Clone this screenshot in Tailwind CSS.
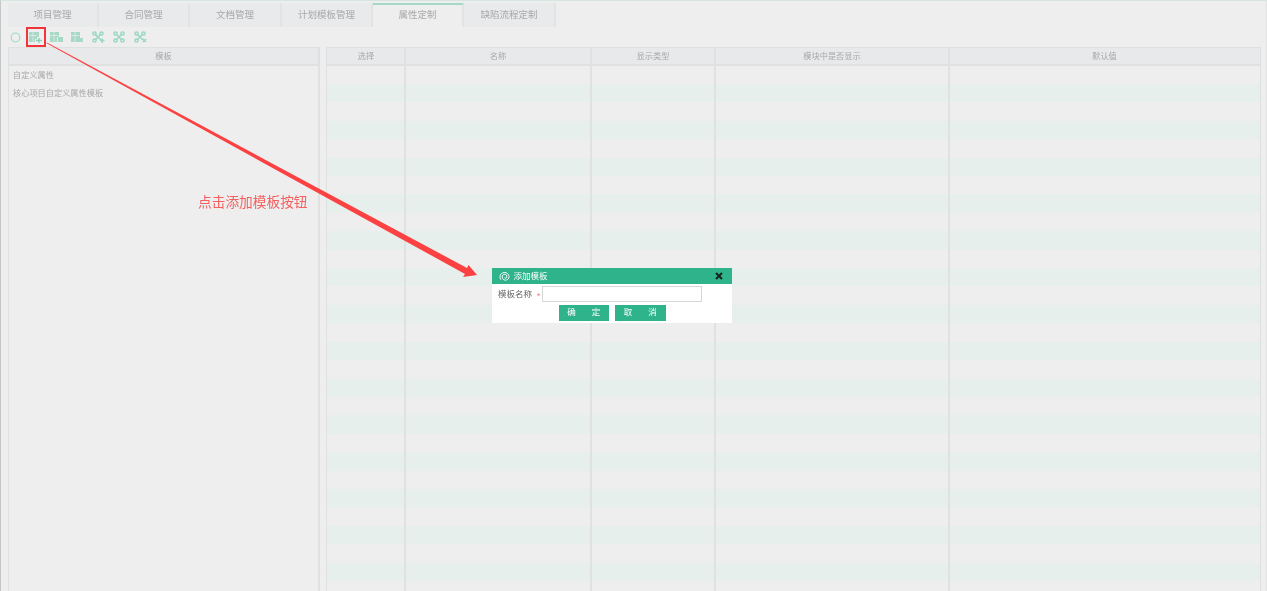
<!DOCTYPE html>
<html lang="zh-CN">

<head>
    <meta charset="UTF-8">
    <title>属性定制</title>
    <script src="https://cdn.jsdelivr.net/npm/@tailwindcss/browser@4"></script>
</head>

<body class="relative h-[591px] w-[1267px] overflow-hidden bg-[#eeeeee] font-['Liberation_Sans','Noto_Sans_CJK_SC',sans-serif]">

    <div class="flex h-[591px] flex-col border-x border-t border-t-[#d5e6e0] border-l-[#c4c8c8] border-r-[#e4e4e4] pl-[7px] pr-[5px] pt-[2px]">

        <!-- tabs -->
        <div class="flex h-6 text-[9.5px] text-[#a8a8a8]">
            <div class="flex w-[91px] items-center justify-center border-r-2 border-[#e2e3e3] bg-[#e9eaeb]"><span class="blur-[0.4px]">项目管理</span></div>
            <div class="flex w-[91px] items-center justify-center border-r-2 border-[#e2e3e3] bg-[#e9eaeb]"><span class="blur-[0.4px]">合同管理</span></div>
            <div class="flex w-[92px] items-center justify-center border-r-2 border-[#e2e3e3] bg-[#e9eaeb]"><span class="blur-[0.4px]">文档管理</span></div>
            <div class="flex w-[91px] items-center justify-center border-r-2 border-[#e2e3e3] bg-[#e9eaeb]"><span class="blur-[0.4px]">计划模板管理</span></div>
            <div class="flex w-[91px] items-center justify-center border-t-2 border-r-2 border-t-[#a5d9c6] border-r-[#e2e3e3] pb-[2px]"><span class="blur-[0.4px]">属性定制</span></div>
            <div class="flex w-[92px] items-center justify-center border-r-2 border-[#e2e3e3] bg-[#e9eaeb]"><span class="blur-[0.4px]">缺陷流程定制</span></div>
        </div>

        <!-- toolbar -->
        <div class="flex h-[20px] items-center gap-[8px] pl-[2px] blur-[0.6px]">
            <svg class="h-[11px] w-[11px]" viewBox="0 0 11 11"><circle cx="5.500" cy="5.500" r="4.400" fill="none" stroke="#a8dcc9" stroke-width="1.300" /></svg>
            <svg class="h-3 w-[13px]" viewBox="0 0 13 12"><path fill="#a8d8c6" d="M0 1h10v5H8v2H6v3H0z" /><path stroke="#eee" stroke-width=".7" d="M0 4.500h8M4 1v10" /><path stroke="#8fcfb8" stroke-width="1.400" d="M7 9.500h6M10 7v5" /></svg>
            <svg class="h-3 w-[13px]" viewBox="0 0 13 12"><path fill="#a8d8c6" d="M0 1h9v5H7v5H0z" /><path stroke="#eee" stroke-width=".7" d="M0 4.500h8M4 1v10" /><path fill="#a8d8c6" d="M8 6h5v5H8z" /></svg>
            <svg class="h-3 w-[13px]" viewBox="0 0 13 12"><path fill="#a8d8c6" d="M0 1h9v6h3v4H0z" /><path stroke="#eee" stroke-width=".7" d="M0 4.500h8M4 1v10" /></svg>
            <svg class="h-3 w-[13px]" viewBox="0 0 13 12" fill="none" stroke="#9bd8c2" stroke-width="1.500"><path d="M3 3l6 6M9 3L3 9" /><circle cx="2.500" cy="2.500" r="1.600" /><circle cx="9.500" cy="2.500" r="1.600" /><circle cx="2.500" cy="9.500" r="1.600" /><path d="M8 9.500h4.500M10.200 7.500v4.500" /></svg>
            <svg class="h-3 w-[13px]" viewBox="0 0 13 12" fill="none" stroke="#9bd8c2" stroke-width="1.500"><path d="M3 3l6 6M9 3L3 9" /><circle cx="2.500" cy="2.500" r="1.600" /><circle cx="9.500" cy="2.500" r="1.600" /><circle cx="2.500" cy="9.500" r="1.600" /><circle cx="9.500" cy="9.500" r="1.600" /></svg>
            <svg class="h-3 w-[13px]" viewBox="0 0 13 12" fill="none" stroke="#9bd8c2" stroke-width="1.500"><path d="M3 3l6 6M9 3L3 9" /><circle cx="2.500" cy="2.500" r="1.600" /><circle cx="9.500" cy="2.500" r="1.600" /><circle cx="2.500" cy="9.500" r="1.600" /><path d="M9 8l3 3M12 8l-3 3" /></svg>
        </div>

        <!-- panels -->
        <div class="flex min-h-0 flex-1 gap-[6px] text-[8.2px] text-[#a8a8a8]">
            <div class="w-[312px] border-t border-r-2 border-l border-[#dfe1e1]">
                <div class="flex h-[17.6px] items-center justify-center border-b-2 border-[#dfe1e1] bg-[#e8e9ea] pt-[2px]"><span class="blur-[0.4px]">模板</span></div>
                <div class="flex h-[18.4px] items-center pl-[4px] pt-[2px]"><span class="blur-[0.4px]">自定义属性</span></div>
                <div class="flex h-[18.4px] items-center pl-[4px] pt-[2px]"><span class="blur-[0.4px]">核心项目自定义属性模板</span></div>
            </div>

            <div class="relative w-[935px] border-x border-t border-[#dfe1e1]">
                <div class="flex h-[17.6px] border-b-2 border-[#dfe1e1] bg-[#e8e9ea] pt-[2px]">
                    <div class="flex w-[78px] items-center justify-center"><span class="blur-[0.4px]">选择</span></div>
                    <div class="flex w-[186px] items-center justify-center"><span class="blur-[0.4px]">名称</span></div>
                    <div class="flex w-[124px] items-center justify-center"><span class="blur-[0.4px]">显示类型</span></div>
                    <div class="flex w-[234px] items-center justify-center"><span class="blur-[0.4px]">模块中是否显示</span></div>
                    <div class="flex flex-1 items-center justify-center"><span class="blur-[0.4px]">默认值</span></div>
                </div>
                <div class="flex flex-col">
                    <div class="h-[18.42px]"></div><div class="h-[18.42px] bg-[#e6efec]"></div>
                    <div class="h-[18.42px]"></div><div class="h-[18.42px] bg-[#e6efec]"></div>
                    <div class="h-[18.42px]"></div><div class="h-[18.42px] bg-[#e6efec]"></div>
                    <div class="h-[18.42px]"></div><div class="h-[18.42px] bg-[#e6efec]"></div>
                    <div class="h-[18.42px]"></div><div class="h-[18.42px] bg-[#e6efec]"></div>
                    <div class="h-[18.42px]"></div><div class="h-[18.42px] bg-[#e6efec]"></div>
                    <div class="h-[18.42px]"></div><div class="h-[18.42px] bg-[#e6efec]"></div>
                    <div class="h-[18.42px]"></div><div class="h-[18.42px] bg-[#e6efec]"></div>
                    <div class="h-[18.42px]"></div><div class="h-[18.42px] bg-[#e6efec]"></div>
                    <div class="h-[18.42px]"></div><div class="h-[18.42px] bg-[#e6efec]"></div>
                    <div class="h-[18.42px]"></div><div class="h-[18.42px] bg-[#e6efec]"></div>
                    <div class="h-[18.42px]"></div><div class="h-[18.42px] bg-[#e6efec]"></div>
                    <div class="h-[18.42px]"></div><div class="h-[18.42px] bg-[#e6efec]"></div>
                    <div class="h-[18.42px]"></div><div class="h-[18.42px] bg-[#e6efec]"></div>
                </div>
                <!-- column lines over the stripes -->
                <div class="absolute inset-y-0 left-[77px] w-[2px] bg-[#e0e2e2]"></div>
                <div class="absolute inset-y-0 left-[263px] w-[2px] bg-[#e0e2e2]"></div>
                <div class="absolute inset-y-0 left-[387px] w-[2px] bg-[#e0e2e2]"></div>
                <div class="absolute inset-y-0 left-[621px] w-[2px] bg-[#e0e2e2]"></div>
            </div>
        </div>
    </div>

    <!-- annotation -->
    <div class="absolute left-[26px] top-[27px] h-[20px] w-[20px] border-2 border-[#f0353b]"></div>
    <svg class="absolute left-0 top-0" width="1267" height="591" viewBox="0 0 1267 591">
        <path d="M47 42.500 L467 268 L468.500 265 L477 275 L463 277 L465 274 L46.600 43.300 Z" fill="#fb4141" />
    </svg>
    <div class="absolute left-[198px] top-[194px] text-[13.7px] leading-[18px] text-[#f4605f] blur-[0.3px]">点击添加模板按钮</div>

    <!-- dialog -->
    <div class="absolute left-[492px] top-[268px] h-[55px] w-[240px] bg-white text-[8.500px]">
        <div class="flex h-[16px] items-center bg-[#2fb38a] pl-[7px] pr-[9px] text-white">
            <svg class="h-[11px] w-[11px]" viewBox="0 0 12 12" fill="none" stroke="#fff" stroke-width="1"><path d="M2 9.500A5 5 0 1 1 11 6c0 2.500-2 4-4 4S3.500 8.500 3.500 6.500 5 3.500 6.500 3.500 8.500 5 8.500 6.500 7 8 6 7.500" /></svg>
            <span class="ml-[3.500px] flex-1 blur-[0.2px]">添加模板</span>
            <svg class="h-[8px] w-[8px]" viewBox="0 0 8 8" stroke="#16241f" stroke-width="2"><path d="M1 1l6 6M7 1l-6 6" /></svg>
        </div>
        <div class="flex h-[21px] items-start pl-[6px] pt-[2px] text-[#666]">
            <span class="pt-[2px] blur-[0.2px]">模板名称</span>
            <span class="ml-[5px] mt-[4px] text-[#ee7a7a]">*</span>
            <div class="ml-[1.500px] h-[16px] w-[160px] border border-[#d5d7d7] bg-white"></div>
        </div>
        <div class="flex justify-center gap-[6px] text-[8.500px] text-white">
            <div class="flex h-[15.500px] w-[50.500px] items-center justify-center gap-[16px] bg-[#2fb38a]"><span class="blur-[0.2px]">确</span><span class="blur-[0.2px]">定</span></div>
            <div class="flex h-[15.500px] w-[50.500px] items-center justify-center gap-[16px] bg-[#2fb38a]"><span class="blur-[0.2px]">取</span><span class="blur-[0.2px]">消</span></div>
        </div>
    </div>

</body>

</html>
